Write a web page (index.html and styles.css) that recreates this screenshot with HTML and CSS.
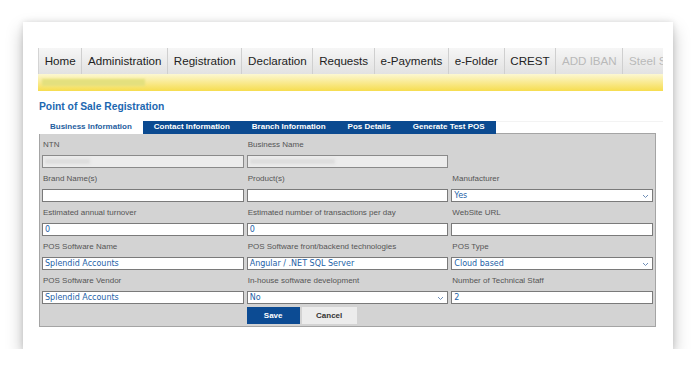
FILE: index.html
```html
<!DOCTYPE html>
<html>
<head>
  <meta charset='UTF-8'>
  <meta name='viewport' content='width=device-width, initial-scale=1.0'>
  <title>Point of Sale Registration</title>
  <link rel="stylesheet" href="styles.css">
</head>
<body>
  <div class='card'>
    <!-- Main menu -->
    <ul class='menu'>
      <li>Home</li>
      <li>Administration</li>
      <li>Registration</li>
      <li>Declaration</li>
      <li>Requests</li>
      <li>e-Payments</li>
      <li>e-Folder</li>
      <li>CREST</li>
      <li class='disabled'>ADD IBAN</li>
      <li class='disabled'>Steel Sector</li>
    </ul>
    <div class='notice-bar'><span class='notice-blur'></span></div>

    <h1 class='page-title'>Point of Sale Registration</h1>

    <!-- Tabs -->
    <div class='tabs'>
      <div class='tab active'>Business Information</div>
      <div class='tab'>Contact Information</div>
      <div class='tab'>Branch Information</div>
      <div class='tab'>Pos Details</div>
      <div class='tab'>Generate Test POS</div>
    </div>

    <!-- Form -->
    <div class='form-panel'>
      <div class='field'>
        <label>NTN</label>
        <div class='box readonly'><span class='blur-text'></span></div>
      </div>
      <div class='field'>
        <label>Business Name</label>
        <div class='box readonly'><span class='blur-text wide'></span></div>
      </div>
      <div class='field'></div>

      <div class='field'>
        <label>Brand Name(s)</label>
        <div class='box'></div>
      </div>
      <div class='field'>
        <label>Product(s)</label>
        <div class='box'></div>
      </div>
      <div class='field'>
        <label>Manufacturer</label>
        <div class='box select'>Yes
          <svg class='caret' width='7' height='5' viewBox='0 0 7 5'><path d='M1 1 L3.5 3.5 L6 1' fill='none' stroke='#6f8fb8' stroke-width='1'/></svg>
        </div>
      </div>

      <div class='field'>
        <label>Estimated annual turnover</label>
        <div class='box'>0</div>
      </div>
      <div class='field'>
        <label>Estimated number of transactions per day</label>
        <div class='box'>0</div>
      </div>
      <div class='field'>
        <label>WebSite URL</label>
        <div class='box'></div>
      </div>

      <div class='field'>
        <label>POS Software Name</label>
        <div class='box'>Splendid Accounts</div>
      </div>
      <div class='field'>
        <label>POS Software front/backend technologies</label>
        <div class='box'>Angular / .NET SQL Server</div>
      </div>
      <div class='field'>
        <label>POS Type</label>
        <div class='box select'>Cloud based
          <svg class='caret' width='7' height='5' viewBox='0 0 7 5'><path d='M1 1 L3.5 3.5 L6 1' fill='none' stroke='#6f8fb8' stroke-width='1'/></svg>
        </div>
      </div>

      <div class='field'>
        <label>POS Software Vendor</label>
        <div class='box'>Splendid Accounts</div>
      </div>
      <div class='field'>
        <label>In-house software development</label>
        <div class='box select'>No
          <svg class='caret' width='7' height='5' viewBox='0 0 7 5'><path d='M1 1 L3.5 3.5 L6 1' fill='none' stroke='#6f8fb8' stroke-width='1'/></svg>
        </div>
      </div>
      <div class='field'>
        <label>Number of Technical Staff</label>
        <div class='box'>2</div>
      </div>

      <div class='actions'>
        <button class='btn-save'>Save</button>
        <button class='btn-cancel'>Cancel</button>
      </div>
    </div>
  </div>
</body>
</html>
```

FILE: styles.css
```css
* { margin: 0; padding: 0; box-sizing: border-box; }
body { background: #fff; font-family: "Liberation Sans", Arial, sans-serif; }
.card { width: 650px; height: 327px; margin: 22px 0 0 23px; padding: 26px 10px 0 15px; background: #fff; box-shadow: 0 8px 16px rgba(0,0,0,0.26), 0 0 6px rgba(0,0,0,0.12); }

.menu { list-style: none; display: flex; height: 26px; overflow: hidden; white-space: nowrap; background: linear-gradient(#f5f5f5, #e3e3e3); border-left: 1px solid #d4d4d4; }
.menu li { flex: none; line-height: 26px; padding: 0 5.7px; font-size: 11.6px; color: #222; border-right: 1px solid #cfcfcf; background: linear-gradient(#f6f6f6, #e2e2e2); }
.menu li.disabled { color: #b9b9b9; }
.notice-bar { height: 17px; background: linear-gradient(#fcf7d2, #f6dd4f); padding: 5px 0 0 4px; }
.notice-blur { display: block; width: 103px; height: 7px; background: #e3e07e; filter: blur(1.2px); }

.page-title { margin: 10px 0 0 1px; font-size: 10.3px; line-height: 12px; color: #1c68b1; font-weight: bold; }

.tabs { display: flex; margin: 8px 0 0 1px; height: 12px; border-top: 1px solid #f3f3f3; }
.tab { padding: 0 11px; font-size: 8px; line-height: 12px; font-weight: bold; color: #fff; background: #0b4a90; margin-top: -1px; height: 13px; }
.tab.active { background: #fff; color: #1f5e9e; }

.form-panel { margin-left: 1px; width: 617px; background: #d3d3d3; border: 1px solid #a4a4a4; padding: 0 2px 2px 2px; display: grid; grid-template-columns: repeat(3, 1fr); column-gap: 3px; }
.field label { display: block; height: 21px; line-height: 21px; font-size: 8px; color: #555; padding-left: 1px; }
.box { position: relative; height: 13px; background: #fff; border: 1px solid #7a7a7a; font-family: "DejaVu Sans", Verdana, sans-serif; font-size: 8px; line-height: 11px; color: #2462a7; padding-left: 2px; }
.box.readonly { background: #ececec; border-color: #8a8a8a; }
.blur-text { display: block; width: 45px; height: 5px; margin-top: 3px; background: #dcdcdc; filter: blur(1.5px); }
.blur-text.wide { width: 85px; }
.caret { position: absolute; right: 3px; top: 4px; }

.actions { grid-column: 2 / 4; display: flex; gap: 2px; margin-top: 3px; }
.actions button { height: 17px; border: none; font-family: "Liberation Sans", Arial, sans-serif; font-size: 8px; font-weight: bold; }
.btn-save { width: 53px; background: #0c4b93; color: #fff; }
.btn-cancel { width: 55px; background: #ececec; color: #333; }
```
